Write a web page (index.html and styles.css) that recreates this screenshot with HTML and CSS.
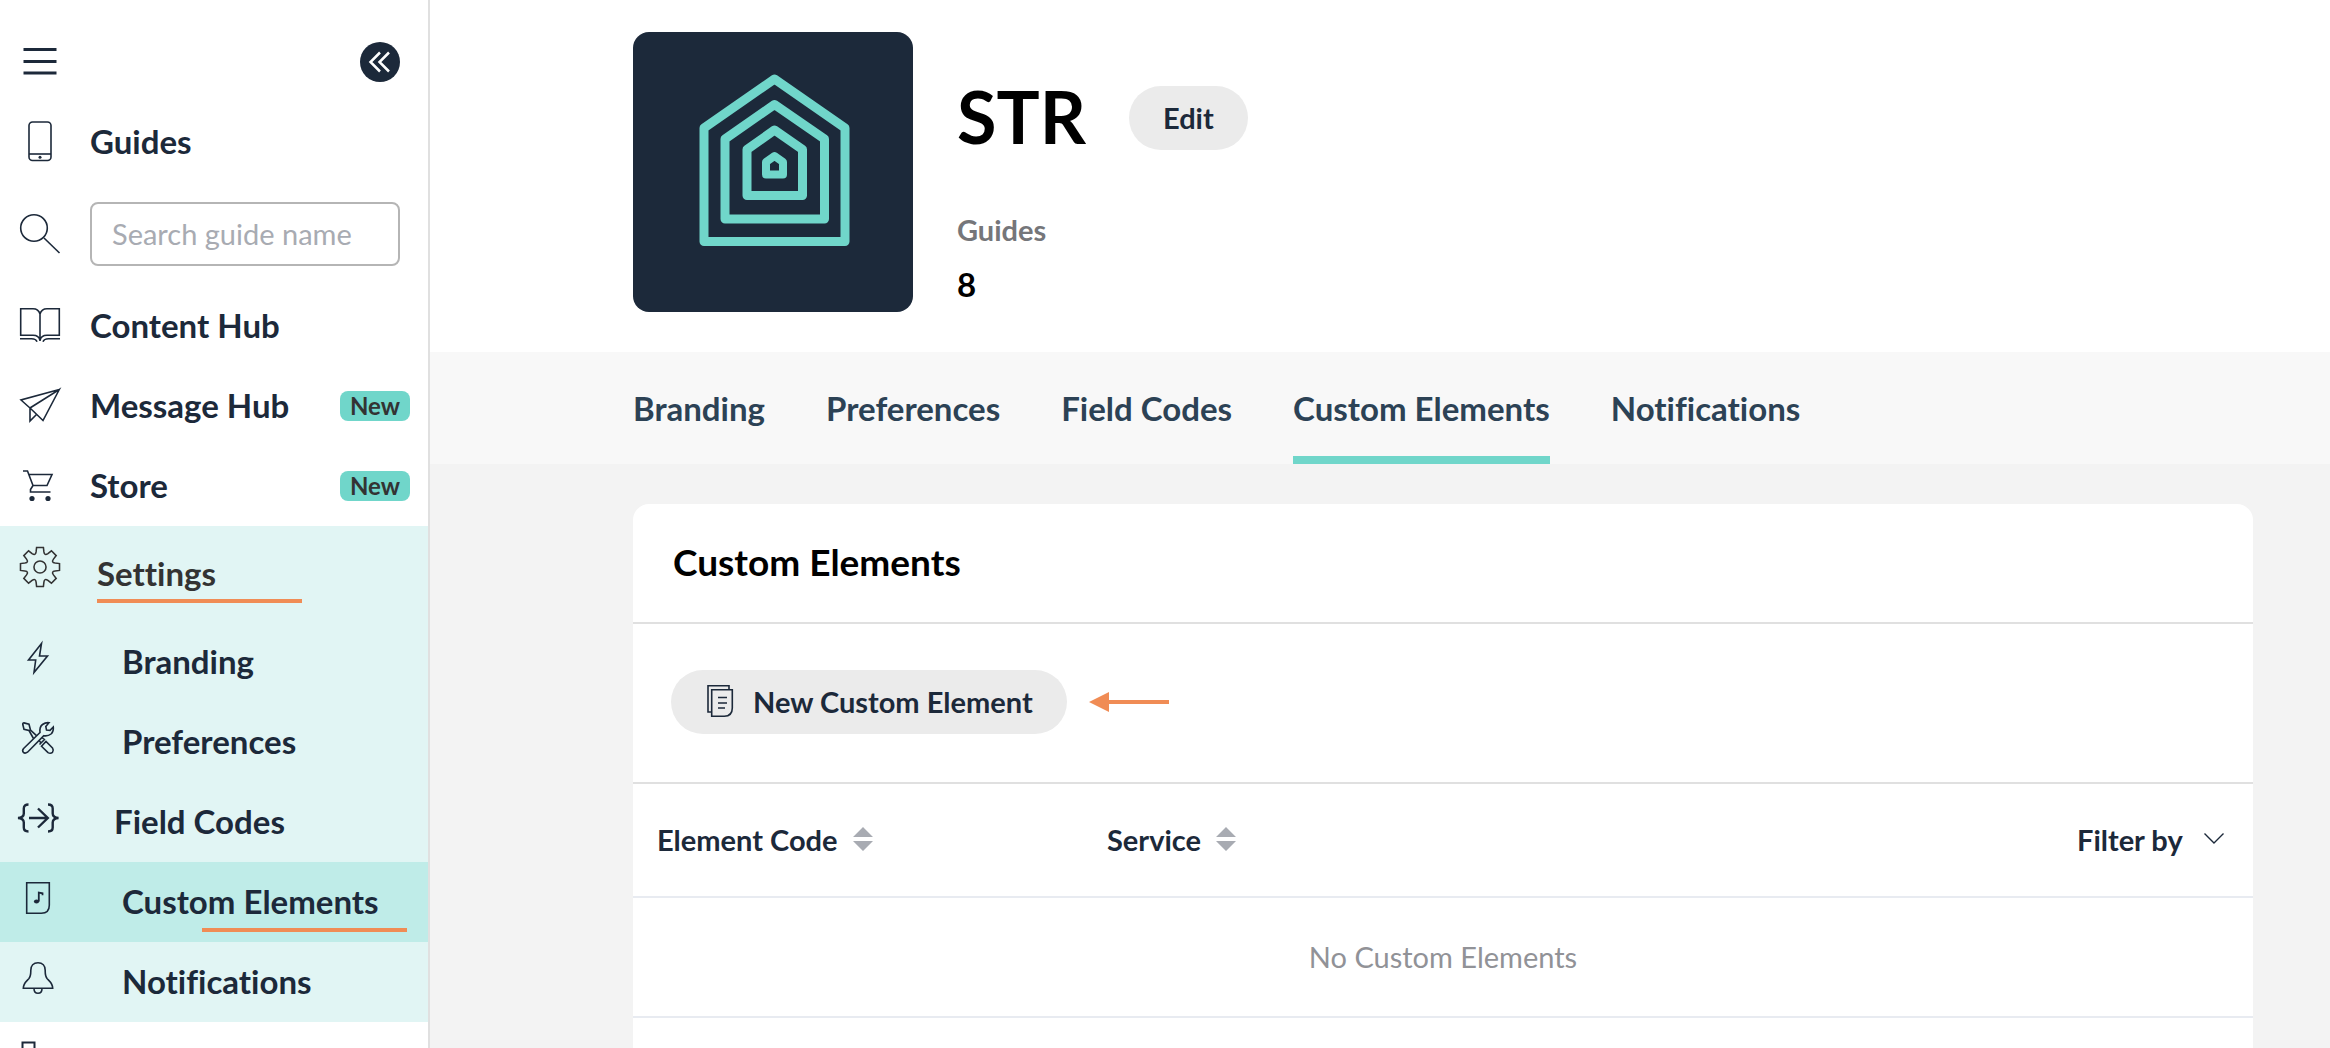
FILE: index.html
```html
<!DOCTYPE html>
<html lang="en">
<head>
  <meta charset="UTF-8" />
  <meta name="viewport" content="width=device-width, initial-scale=1.0"/>
  <title>STR - Custom Elements</title>
  <link rel="stylesheet" href="styles.css">
</head>
<body>
  <div class="app">
    <aside class="sidebar">
      <div class="sidebar-top">
        <button class="icon-btn" aria-label="Menu">
          <svg class="icon" viewBox="0 0 40 40" stroke-width="3"><path d="M3.500 7.500h33M3.500 19.500h33M3.500 31h33"/></svg>
        </button>
        <button class="icon-btn collapse-btn" aria-label="Collapse sidebar">
          <svg class="icon" viewBox="0 0 40 40" stroke-width="2.500"><path d="M20 10.500L10.500 20l9.500 9.500M29 10.500L19.500 20l9.500 9.500"/></svg>
        </button>
      </div>

      <nav>
        <a class="nav-item" href="#">
          <svg class="icon" viewBox="0 0 40 40"><rect x="9" y="0" width="22" height="38.500" rx="3.500"/><path d="M9 32h22"/><circle cx="20" cy="35.300" r="1.500" fill="currentColor" stroke="none"/></svg>
          <span>Guides</span>
        </a>

        <div class="nav-search">
          <svg class="icon" viewBox="0 0 40 40"><circle cx="14" cy="14" r="13.300"/><path d="M24 24l15.500 15"/></svg>
          <input type="text" placeholder="Search guide name" aria-label="Search guide name">
        </div>

        <a class="nav-item" href="#">
          <svg class="icon" viewBox="0 0 40 40"><path d="M20 8q-1.500-5.300-7-5.300H.7v26.600H13q6 0 7 5.300q1-5.300 7-5.300h12.300V2.700H27q-5.500 0-7 5.300v27M0 32.700h11.500q4.500 0 5.500 3M40 32.700H28.500q-4.500 0-5.500 3"/></svg>
          <span>Content Hub</span>
        </a>
        <a class="nav-item" href="#">
          <svg class="icon" viewBox="0 0 40 40"><path d="M39.300 3.500L1 14l9 8v13l6.500-6.500M39.300 3.500L23 34.500 10 22z"/></svg>
          <span>Message Hub</span>
          <span class="badge">New</span>
        </a>
        <a class="nav-item" href="#">
          <svg class="icon" viewBox="0 0 40 40"><path d="M3 5h4.500L13 19.500h14L32 8.500H9M13 19.500l-2.500 4v2.500h20"/><circle cx="12" cy="32.500" r="2.600" fill="currentColor" stroke="none"/><circle cx="28" cy="32.500" r="2.600" fill="currentColor" stroke="none"/></svg>
          <span>Store</span>
          <span class="badge">New</span>
        </a>

        <div class="nav-group">
          <a class="nav-item nav-settings" href="#">
            <svg class="icon" viewBox="-20.500 -20.500 41 41"><path d="M-3.500-20H3.500L4-15.500Q4.600-11.200 8.100-13.800L11.700-16.600L16.600-11.700L13.800-8.100Q11.200-4.600 15.500-4L20-3.500V3.500L15.500 4Q11.200 4.600 13.800 8.100L16.600 11.700L11.700 16.600L8.100 13.800Q4.600 11.200 4 15.500L3.500 20H-3.500L-4 15.500Q-4.600 11.200-8.100 13.800L-11.700 16.600L-16.600 11.700L-13.800 8.100Q-11.200 4.600-15.500 4L-20 3.500V-3.500L-15.500-4Q-11.200-4.600-13.800-8.100L-16.600-11.700L-11.700-16.600L-8.100-13.800Q-4.600-11.200-4-15.500Z"/><circle r="6.200"/></svg>
            <span>Settings</span>
          </a>
          <a class="nav-item nav-sub" href="#">
            <svg class="icon" viewBox="-4 0 40 32"><path d="M19.500 1.500L6.500 18h7.200L12 30.500 25.500 14h-8z"/></svg>
            <span>Branding</span>
          </a>
          <a class="nav-item nav-sub" href="#">
            <svg class="icon" viewBox="-4 0 40 32"><path d="M1.600 26.500L18 10.500Q17.300 5 20.500 2.500Q23.500.3 27 .7L23.800 4.500L24.500 8L28 8.300L31.300 5Q31.800 9.500 29 12Q26 14.400 21.800 13.700L5.500 30.200Q3 32 1.400 30.400Q-.2 28.700 1.600 26.500ZM14.500 13.700L8.500 8L7 2.200L2 .9Q.6.9.8 2.500L2 7.300L7 8.500L11.500 16.500M17.500 19l2 2.500M20.500 16l2.500 2M17.500 22.500l5.500-5.500M19.500 24.300l6.500 6.300Q28.500 32 30.500 30.300Q32 28.200 30.500 26L24 19.500Z"/></svg>
            <span>Preferences</span>
          </a>
          <a class="nav-item nav-sub nav-codes" href="#">
            <svg class="icon" viewBox="-4 0 40 32" stroke-width="2.400"><path d="M6.500 2.500Q1.800 2.500 1.800 6.500v5q0 4-5.800 4.500q5.800.5 5.800 4.500v5q0 4 4.700 4M26 2.500q4.700 0 4.700 4v5q0 4 5.800 4.500q-5.800.5-5.800 4.500v5q0 4-4.700 4M7 16h19M16 6.500L25.800 16 16 25.500"/></svg>
            <span>Field Codes</span>
          </a>
          <a class="nav-item nav-sub active" href="#">
            <svg class="icon" viewBox="-4 0 40 32"><path d="M4.700.7h22.600v22.600q0 8-8 8H4.700z"/><ellipse cx="14.500" cy="19.500" rx="2.600" ry="2.100" fill="currentColor" stroke="none"/><path d="M16.800 19.500V10.500l3.700.8v2" stroke-width="1.800"/></svg>
            <span>Custom Elements</span>
          </a>
          <a class="nav-item nav-sub" href="#">
            <svg class="icon" viewBox="-4 0 40 32"><path d="M16 .7c-4.500 0-7.200 3.300-7.200 7.500 0 4 .2 6-2 8.500C3.500 20 1.300 21.500 1.300 26.300h29.400C30.700 21.500 28.500 20 25.200 16.700c-2.200-2.500-2-4.500-2-8.500C23.200 4 20.500.7 16 .7zM12 26.500q0 4.700 4 4.700t4-4.700"/></svg>
            <span>Notifications</span>
          </a>
        </div>

        <a class="nav-item" href="#" aria-label="More">
          <svg class="icon" viewBox="0 0 40 40" stroke-width="2"><path d="M2.500 39V.5h12V39M14.500 14h11v25M25.500 24h11v15M0 39h40"/></svg>
        </a>
      </nav>
    </aside>

    <main class="main">
      <header class="profile">
        <svg class="logo" viewBox="0 0 280 280" role="img" aria-label="STR logo">
          <path d="M141.500 47L212 96v113.500H71V96zM141.500 72.500L191.500 107v80H92v-80zM141.500 98l28 19.500v46H114v-46z" stroke-width="9"/>
          <path d="M141.500 124l8.500 6v12.500h-17V130z" stroke-width="8"/>
        </svg>
        <div class="profile-info">
          <div class="profile-title">
            <h1>STR</h1>
            <button class="pill-btn">Edit</button>
          </div>
          <p class="stat-label">Guides</p>
          <p class="stat-value">8</p>
        </div>
      </header>

      <nav class="tabs">
        <a href="#">Branding</a>
        <a href="#">Preferences</a>
        <a href="#">Field Codes</a>
        <a class="active" href="#">Custom Elements</a>
        <a href="#">Notifications</a>
      </nav>

      <section class="content">
        <div class="card">
          <h2>Custom Elements</h2>
          <div class="toolbar">
            <button class="pill-btn new-btn">
              <svg viewBox="0 0 26 32"><path d="M4.500 27H1V.7h21V4.500M4.700 4.700h20.600V23q0 8-8 8.300H4.700zM11 12.500h9M11 18h9M11 23h7"/></svg>
              New Custom Element
            </button>
            <svg class="arrow" viewBox="0 0 80 20"><path d="M0 10L20 0v8h60v4H20v8z"/></svg>
          </div>
          <table>
            <thead>
              <tr>
                <th class="col-code"><button class="sort-btn">Element Code <svg viewBox="0 0 20 24"><path d="M0 10L10 0l10 10zM0 14h20L10 24z"/></svg></button></th>
                <th><button class="sort-btn">Service <svg viewBox="0 0 20 24"><path d="M0 10L10 0l10 10zM0 14h20L10 24z"/></svg></button></th>
                <th class="col-filter">
                  <label class="filter">
                    <select aria-label="Filter by"><option>Filter by</option></select>
                    <svg viewBox="0 0 20 20"><path d="M.5 4.500L10 14l9.500-9.500"/></svg>
                  </label>
                </th>
              </tr>
            </thead>
            <tbody>
              <tr><td colspan="3">No Custom Elements</td></tr>
            </tbody>
          </table>
        </div>
      </section>
    </main>
  </div>
</body>
</html>
```

FILE: styles.css
```css
* {
  box-sizing: border-box;
}

body {
  margin: 0;
  font-family: Lato, "Open Sans", sans-serif;
  font-variant-ligatures: none;
  color: #1c293a;
  background: #f3f3f3;
}

a {
  color: inherit;
  text-decoration: none;
}

button, input, select {
  font-family: inherit;
  color: inherit;
}

button {
  border: none;
  padding: 0;
  background: none;
  cursor: pointer;
}

h1, h2, p {
  margin: 0;
}

svg {
  flex: none;
  overflow: visible;
}

.app {
  display: flex;
  height: 100vh;
  overflow: hidden;
}

/* Sidebar */
.sidebar {
  flex: none;
  width: 430px;
  background: #fff;
  border-right: 2px solid #e0e0e0;
  overflow: hidden;
}

.sidebar-top {
  display: flex;
  justify-content: space-between;
  align-items: flex-end;
  height: 102px;
  padding: 0 28px 20px 20px;
}

.icon-btn {
  display: flex;
}

.collapse-btn {
  border-radius: 50%;
  background: #1c293a;
  color: #fff;
}

.icon {
  width: 40px;
  height: 40px;
  fill: none;
  stroke: currentColor;
}

.icon:not([stroke-width]) {
  stroke-width: 1.6px;
}

.nav-item {
  position: relative;
  display: flex;
  align-items: center;
  gap: 30px;
  height: 80px;
  padding: 0 18px 0 20px;
  font-size: 33px;
  font-weight: bold;
}

.nav-item span {
  margin-bottom: 2px;
}

.nav-search {
  display: flex;
  align-items: center;
  gap: 30px;
  height: 104px;
  padding: 0 28px 0 20px;
}

.nav-search input {
  flex: 1;
  min-width: 0;
  height: 64px;
  padding: 0 20px 2px;
  border: 2px solid #b5b5b5;
  border-radius: 8px;
  background: #fff;
  font-size: 29px;
}

.nav-search input::placeholder {
  color: #a8abb2;
}

.nav-item .badge {
  margin: 0 0 0 auto;
  padding: 0 10px;
  border-radius: 8px;
  background: #70d6ca;
  color: #333;
  font-size: 24px;
  line-height: 30px;
}

.nav-group {
  background: #e1f5f4;
}

.nav-settings {
  gap: 37px;
  height: 96px;
  color: #333;
}

.nav-settings .icon {
  margin-bottom: 14px;
}

.nav-sub {
  gap: 64px;
  padding-left: 18px;
}

.nav-sub .icon {
  height: 32px;
  margin-bottom: 8px;
}

.nav-codes {
  gap: 56px;
}

.nav-sub.active {
  background: #bfece8;
}

/* Orange marks under the highlighted items */
.nav-settings::after,
.nav-sub.active::after {
  content: "";
  position: absolute;
  left: 97px;
  bottom: 19px;
  width: 205px;
  height: 4px;
  background: #f08c55;
}

.nav-sub.active::after {
  left: 202px;
  bottom: 10px;
}

/* Main */
.main {
  flex: 1;
  min-width: 0;
}

.profile {
  display: flex;
  gap: 44px;
  padding: 32px 77px 40px 203px;
  background: #fff;
}

.logo {
  width: 280px;
  height: 280px;
  border-radius: 16px;
  background: #1c293a;
  fill: none;
  stroke: #70d6ca;
  stroke-linejoin: round;
}

.profile-info {
  padding-top: 40px;
  color: #000;
}

.profile-title {
  display: flex;
  align-items: center;
  gap: 43px;
  height: 92px;
  margin-bottom: 48px;
}

h1 {
  margin-bottom: 4px;
  font-size: 72px;
}

.pill-btn {
  height: 64px;
  padding: 0 34px 2px;
  border-radius: 32px;
  background: #ebebeb;
  color: #1c293a;
  font-size: 29px;
  font-weight: bold;
}

.stat-label {
  margin-bottom: 16px;
  color: #75767a;
  font-size: 29px;
  font-weight: bold;
  line-height: 36px;
}

.stat-value {
  font-size: 33px;
  font-weight: bold;
  line-height: 40px;
}

.tabs {
  display: flex;
  gap: 61px;
  height: 112px;
  padding: 0 77px 0 203px;
  background: #f8f8f8;
  color: #2c4255;
  font-size: 33px;
  font-weight: bold;
  line-height: 112px;
}

.tabs .active {
  box-shadow: inset 0 -8px #70d6ca;
}

.content {
  padding: 40px 77px 40px 203px;
}

.card {
  min-height: 640px;
  border-radius: 16px;
  background: #fff;
}

h2 {
  padding: 0 40px 2px;
  border-bottom: 2px solid #e0e0e0;
  color: #000;
  font-size: 37px;
  line-height: 116px;
}

.toolbar {
  display: flex;
  align-items: center;
  gap: 22px;
  padding: 46px 38px 48px;
  border-bottom: 2px solid #e0e0e0;
}

.new-btn {
  display: flex;
  align-items: center;
  gap: 20px;
  padding-left: 36px;
}

.new-btn svg {
  width: 26px;
  height: 32px;
  fill: none;
  stroke: currentColor;
  stroke-width: 1.6px;
}

.arrow {
  width: 80px;
  height: 20px;
  fill: #f08c55;
}

table {
  width: 100%;
  border-collapse: collapse;
}

th {
  height: 113px;
  padding: 0 24px 2px;
  border-bottom: 2px solid #e8ebf1;
  text-align: left;
}

.col-code {
  width: 450px;
}

.sort-btn {
  display: flex;
  align-items: center;
  gap: 15px;
  font-size: 29px;
  font-weight: bold;
}

.sort-btn svg {
  width: 20px;
  height: 24px;
  fill: #a8abb2;
}

.col-filter {
  padding-right: 29px;
}

.filter {
  display: flex;
  justify-content: flex-end;
  align-items: center;
  gap: 20px;
}

.filter select {
  appearance: none;
  padding: 0;
  border: none;
  background: none;
  font-size: 29px;
  font-weight: bold;
}

.filter svg {
  width: 20px;
  height: 20px;
  fill: none;
  stroke: currentColor;
  stroke-width: 1.4px;
}

td {
  height: 120px;
  padding: 0 0 2px;
  border-bottom: 2px solid #e8ebf1;
  color: #919297;
  font-size: 29px;
  text-align: center;
}
```
